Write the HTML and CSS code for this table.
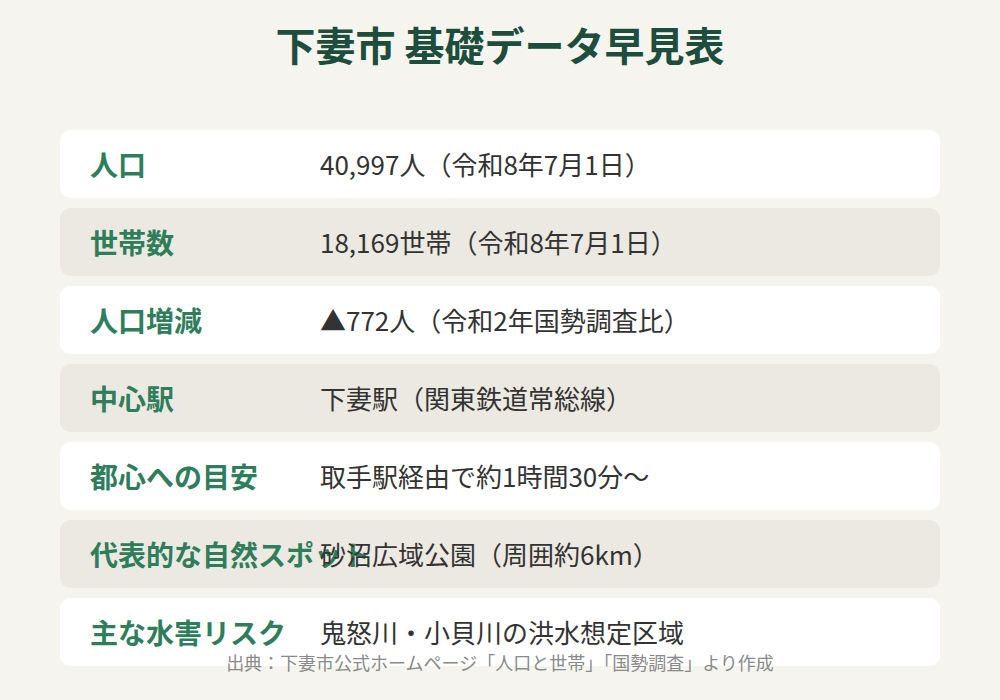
FILE: index.html
```html
<!DOCTYPE html>
<html lang="ja">
<head>
<meta charset="utf-8">
<title>下妻市 基礎データ早見表</title>
<link rel="stylesheet" href="styles.css">
</head>
<body>
<div class="page">
  <h1 class="title">下妻市 基礎データ早見表</h1>
  <div class="table">
    <div class="row"><div class="label">人口</div><div class="value">40,997人（令和8年7月1日）</div></div>
    <div class="row alt"><div class="label">世帯数</div><div class="value">18,169世帯（令和8年7月1日）</div></div>
    <div class="row"><div class="label">人口増減</div><div class="value">▲772人（令和2年国勢調査比）</div></div>
    <div class="row alt"><div class="label">中心駅</div><div class="value">下妻駅（関東鉄道常総線）</div></div>
    <div class="row"><div class="label">都心への目安</div><div class="value">取手駅経由で約1時間30分〜</div></div>
    <div class="row alt"><div class="label">代表的な自然スポット</div><div class="value">砂沼広域公園（周囲約6km）</div></div>
    <div class="row"><div class="label">主な水害リスク</div><div class="value">鬼怒川・小貝川の洪水想定区域</div></div>
  </div>
  <p class="source">出典：下妻市公式ホームページ「人口と世帯」「国勢調査」より作成</p>
</div>
</body>
</html>
```
FILE: styles.css
```css
html, body {
  margin: 0;
  padding: 0;
  background: #f5f4ef;
}
.page {
  width: 1000px;
  height: 700px;
  overflow: hidden;
  font-family: "Noto Sans CJK JP", "Noto Sans", sans-serif;
}
.title {
  margin: 18px 0 0;
  font-size: 40px;
  line-height: 52px;
  font-weight: 700;
  text-align: center;
  color: #1d4e3d;
}
.table {
  margin: 60px 60px 0;
  display: flex;
  flex-direction: column;
  gap: 10px;
}
.row {
  height: 68px;
  display: flex;
  align-items: center;
  padding: 0 30px;
  background: #ffffff;
  border-radius: 10px;
}
.row.alt {
  background: #ebe9e1;
}
.label {
  flex: 0 0 230px;
  width: 230px;
  white-space: nowrap;
  font-size: 28px;
  line-height: 40px;
  font-weight: 700;
  color: #2e7d5b;
}
.value {
  white-space: nowrap;
  font-size: 26px;
  line-height: 40px;
  color: #333333;
}
.source {
  margin: -16px 0 0;
  font-size: 18px;
  line-height: 24px;
  text-align: center;
  color: #8a8a8a;
}
```
